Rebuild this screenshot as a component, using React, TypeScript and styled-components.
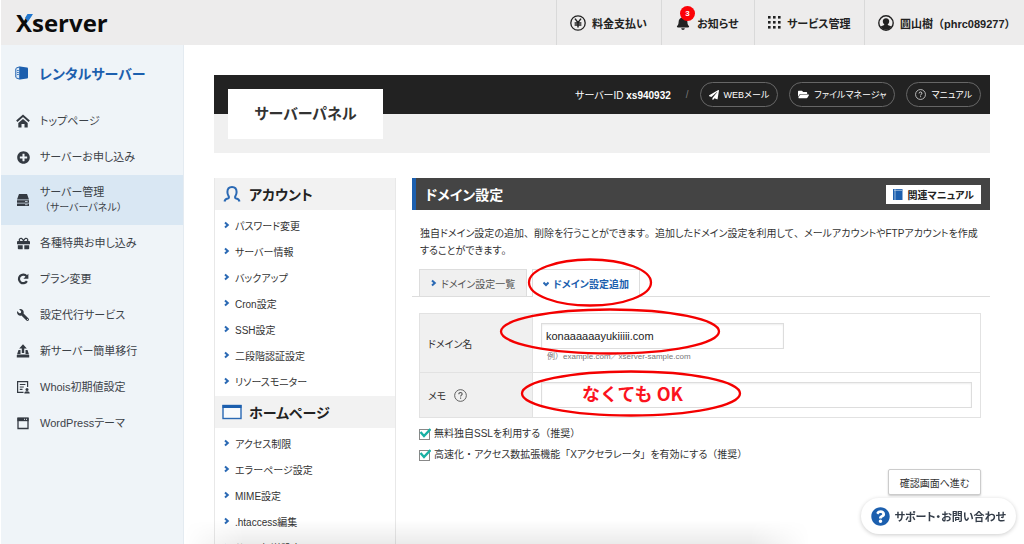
import React from "react";
import styled, { createGlobalStyle, css } from "styled-components";
import {
  FaPlusCircle,
  FaGift,
  FaWrench,
  FaPaperPlane,
  FaFolderOpen,
  FaBell,
  FaQuestionCircle,
} from "react-icons/fa";

const blue = "#1c5fae";

const GlobalStyle = createGlobalStyle`
  * { box-sizing: border-box; }
  html, body, #root { height: 100%; }
  body {
    margin: 0;
    overflow: hidden;
    background: #fff;
    color: #333;
    font-family: "Liberation Sans", "Noto Sans CJK JP", sans-serif;
    font-size: 10px;
    font-feature-settings: "palt";
  }
  h1, h2, h3, p, ul { margin: 0; padding: 0; }
  ul { list-style: none; }
  a { color: inherit; text-decoration: none; }
  button, input { font: inherit; color: inherit; font-feature-settings: inherit; }
  svg { display: block; flex: none; }
`;

const FullWidth = styled.span`
  font-feature-settings: normal;
`;

/* Kana are set proportionally, punctuation keeps its full width. */
const Jp = ({ children }: { children: string }) => (
  <span>
    {children.split(/([、。（）「」／・]+)/).map((part, i) =>
      i % 2 ? <FullWidth key={i}>{part}</FullWidth> : part
    )}
  </span>
);

const Page = styled.div`
  height: 100%;
  display: flex;
  flex-direction: column;
  padding-left: 1px;
`;

const Header = styled.header`
  flex: none;
  height: 45px;
  display: flex;
  justify-content: space-between;
  background: #edecec;
`;

const Logo = styled.a`
  position: relative;
  padding-left: 15px;
  font: 700 24px/46px "Open Sans", sans-serif;
  color: #0c0c0c;
`;

const LogoAccent = styled.svg`
  position: absolute;
  left: 23px;
  top: 14px;
`;

const HeaderNav = styled.nav`
  display: flex;
`;

const HeaderItem = styled.a<{ $width: number }>`
  width: ${(p) => p.$width}px;
  display: flex;
  align-items: center;
  padding-left: 13px;
  gap: 6px;
  border-left: 1px solid #d9d9d9;
  font-size: 11px;
  font-weight: 700;
  white-space: nowrap;
  color: #222;
`;

const BellWrap = styled.span`
  position: relative;
  padding: 0 1px;
`;

const Badge = styled.span`
  position: absolute;
  left: 5px;
  top: -10px;
  width: 15px;
  height: 15px;
  border-radius: 50%;
  background: #fb0207;
  color: #fff;
  font-size: 8px;
  line-height: 15px;
  text-align: center;
`;

const Body = styled.div`
  flex: 1;
  min-height: 0;
  display: flex;
`;

const Sidebar = styled.nav`
  flex: none;
  width: 183px;
  background: #eff4f8;
  border-right: 1px solid #e4ebf1;
`;

const SideTitle = styled.a`
  height: 58px;
  display: flex;
  align-items: center;
  gap: 10px;
  padding: 0 0 3px 14px;
  font-size: 14px;
  font-weight: 700;
  color: ${blue};
`;

const SideItem = styled.a<{ $active?: boolean }>`
  min-height: ${(p) => (p.$active ? 50 : 36)}px;
  display: flex;
  align-items: center;
  gap: 10px;
  padding-left: 15px;
  font-size: 11px;
  line-height: 16px;
  color: #3c4248;
  ${(p) => p.$active && css`background: #d9e7f3;`}
  small {
    display: block;
    font-size: 10px;
  }
`;

const SideIcon = styled.span`
  width: 14px;
  display: flex;
  justify-content: center;
  color: #343a42;
`;

const MirroredWrench = styled(FaWrench)`
  transform: scaleX(-1);
`;

const Main = styled.main`
  flex: 1;
  min-width: 0;
  padding: 30px 34px 0 30px;
  overflow: hidden;
`;

const PanelHeader = styled.div`
  display: grid;
  grid-template-rows: 39px 39px;
  background: linear-gradient(#222 39px, #f0f0f0 39px);
`;

const PanelTitle = styled.h1`
  grid-area: 1 / 1 / 3 / 2;
  width: 155px;
  height: 50px;
  margin: 14px;
  background: #fff;
  font-size: 15px;
  line-height: 50px;
  text-align: center;
`;

const PanelBar = styled.div`
  grid-area: 1 / 2;
  display: flex;
  align-items: center;
  justify-content: flex-end;
  padding-right: 9px;
  gap: 11px;
  color: #fff;
`;

const ServerId = styled.span`
  font-size: 10px;
`;

const Slash = styled.span`
  color: #777;
  padding-left: 4px;
`;

const PillLink = styled.a`
  height: 25px;
  display: flex;
  align-items: center;
  gap: 5px;
  padding: 0 8px;
  border: 1px solid #666;
  border-radius: 13px;
  font-size: 9px;
  white-space: nowrap;
`;

const Columns = styled.div`
  display: flex;
  align-items: flex-start;
  gap: 16px;
  margin-top: 25px;
`;

const Menu = styled.nav`
  flex: none;
  width: 182px;
  border: 1px solid #e8e8e8;
  border-width: 0 1px;
`;

const MenuHead = styled.h3`
  height: 32px;
  display: flex;
  align-items: center;
  gap: 7px;
  padding-left: 7px;
  background: #f2f2f2;
  font-size: 14px;
  color: #222;
`;

const MenuList = styled.ul`
  padding: 2px 0;
`;

const MenuLink = styled.a`
  height: 26px;
  display: flex;
  align-items: center;
  gap: 5px;
  padding-left: 9px;
`;

const Content = styled.section`
  position: relative;
  flex: 1;
  min-width: 0;
`;

const ContentHead = styled.div`
  height: 32px;
  display: flex;
  align-items: center;
  justify-content: space-between;
  padding: 0 9px;
  border-left: 4px solid ${blue};
  background: #444;
  color: #fff;
  h2 { font-size: 14px; }
`;

const ManualButton = styled.button`
  height: 19px;
  display: flex;
  align-items: center;
  gap: 5px;
  padding: 0 7px;
  border: 0;
  background: #fff;
  color: #222;
  font-weight: 700;
`;

const Lead = styled.p`
  padding: 15px 0 10px 8px;
  line-height: 17px;
`;

const Tabs = styled.div`
  display: flex;
  gap: 5px;
  padding-left: 7px;
  border-bottom: 1px solid #ddd;
`;

const Tab = styled.a<{ $active?: boolean }>`
  height: ${(p) => (p.$active ? 28 : 27)}px;
  width: 108px;
  display: flex;
  align-items: center;
  justify-content: center;
  gap: 4px;
  border: 1px solid #ddd;
  border-bottom: 0;
  margin-bottom: ${(p) => (p.$active ? "-1px" : "0")};
  background: ${(p) => (p.$active ? "#fff" : "#f0f0f0")};
  color: ${(p) => (p.$active ? blue : "#555")};
  font-weight: ${(p) => (p.$active ? 700 : 400)};
`;

const FormArea = styled.form`
  padding: 16px 9px 0 7px;
`;

const Table = styled.table`
  width: 100%;
  border-collapse: collapse;
  th, td {
    border: 1px solid #e2e2e2;
    text-align: left;
    font-weight: 400;
  }
  th {
    width: 113px;
    padding: 0 8px;
    background: #f0f0f0;
  }
  td { padding: 9px 8px; }
`;

const ThLabel = styled.label`
  display: flex;
  align-items: center;
  gap: 8px;
`;

const TextInput = styled.input<{ $wide?: boolean }>`
  display: block;
  width: ${(p) => (p.$wide ? "100%" : "243px")};
  height: 26px;
  padding: 0 4px;
  border: 1px solid #ddd;
  font-size: 11px;
  color: #222;
  box-shadow: inset 0 1px 2px #eee;
`;

const Hint = styled.p`
  padding: 1px 0 0 6px;
  font-size: 8px;
  line-height: 13px;
  color: #777;
`;

const Checks = styled.div`
  display: grid;
  gap: 5px;
  padding-top: 8px;
`;

const CheckLabel = styled.label`
  display: flex;
  align-items: center;
  gap: 3px;
  line-height: 16px;
`;

const CheckMark = styled.span`
  position: relative;
  width: 12px;
  height: 12px;
  input {
    appearance: none;
    display: block;
    width: 11px;
    height: 11px;
    margin: 1px 0 0;
    border: 1px solid #888;
    background: #fff;
  }
  svg {
    position: absolute;
    inset: 0;
  }
`;

const Actions = styled.div`
  display: flex;
  justify-content: flex-end;
  padding-top: 6px;
`;

const SubmitButton = styled.button`
  width: 93px;
  height: 26px;
  padding: 0;
  border: 1px solid #ccc;
  border-radius: 2px;
  background: #fff;
  box-shadow: 0 1px 2px #ccc;
`;

const Marks = styled.svg`
  position: absolute;
  left: 0;
  top: 0;
  pointer-events: none;
`;

const MarkText = styled.span`
  position: absolute;
  left: 170px;
  top: 202px;
  font-size: 18px;
  font-weight: 700;
  line-height: 26px;
  color: #fb1320;
  font-family: "Noto Sans CJK JP", sans-serif;
  font-feature-settings: normal;
`;

const Support = styled.button`
  position: fixed;
  right: 8px;
  bottom: 10px;
  height: 36px;
  display: flex;
  align-items: center;
  gap: 5px;
  padding: 0 10px;
  border: 0;
  border-radius: 18px;
  background: #fff;
  box-shadow: 0 1px 4px rgba(0, 0, 0, 0.2);
  font-size: 11px;
  font-weight: 700;
  color: #333c48;
`;

const BottomFade = styled.div`
  position: fixed;
  left: 184px;
  right: 214px;
  bottom: 0;
  height: 24px;
  background: linear-gradient(rgba(0, 0, 0, 0), rgba(0, 0, 0, 0.08));
  mask-image: linear-gradient(90deg, transparent, #000 60px, #000 calc(100% - 60px), transparent);
  pointer-events: none;
`;

const Chevron = ({ down }: { down?: boolean }) => (
  <svg width="6" height="8" viewBox="0 0 6 8" fill="none" stroke="#2a69b4" strokeWidth="2">
    {down ? <path d="M0.5 2.5 3 5 5.5 2.5" /> : <path d="M1 1.5 3.8 4 1 6.5" />}
  </svg>
);

const YenIcon = () => (
  <svg width="16" height="16" viewBox="0 0 16 16" fill="none" stroke="#222" strokeWidth="1.3">
    <circle cx="8" cy="8" r="7.2" />
    <path d="M5 3.600 8 7.600 11 3.600M8 7.600v5M4.600 7.900h6.800M4.600 10.100h6.800" strokeWidth="1.500" />
  </svg>
);

const GridIcon = () => (
  <svg width="13" height="13" viewBox="0 0 13 13" fill="#222">
    {[0, 5, 10].map((y) => [0, 5, 10].map((x) => <rect key={`${x}-${y}`} x={x} y={y} width="2.6" height="2.6" />))}
  </svg>
);

const UserIcon = () => (
  <svg width="16" height="16" viewBox="0 0 16 16">
    <circle cx="8" cy="8" r="7.2" fill="none" stroke="#222" strokeWidth="1.4" />
    <path d="M8 3.200c2.100 0 3.200 1.300 3.200 3.100 0 1.400-.6 2.400-1.400 3v.8l3.600 1.500C12.200 13.700 10.200 14.800 8 14.800s-4.200-1.100-5.400-3.200l3.600-1.500v-.8C5.400 8.700 4.800 7.700 4.800 6.300c0-1.800 1.100-3.100 3.200-3.100z" fill="#222" />
  </svg>
);

const BuildingIcon = () => (
  <svg width="14" height="14" viewBox="0 0 14 14">
    <path d="M5 .5 12 1.500q1 .2 1 1v9q0 .8-1 1L5 13.500z" fill={blue} />
    <path d="M4.700.8 1.500 2Q.8 2.300.8 3v8q0 .7.7 1l3.200 1.200z" fill="#dce9f6" stroke={blue} strokeWidth="1" />
    <path d="M2 4.500h1.800M2 6.500h1.800M2 8.500h1.800" stroke={blue} strokeWidth=".8" />
  </svg>
);

const HomeIcon = () => (
  <svg width="14" height="14" viewBox="0 0 14 14">
    <path d="M.8 7.200 7 1.800l6.200 5.400" fill="none" stroke="#343a42" strokeWidth="2" />
    <path d="M7 5 2.300 9v4.500h3.200V10h3v3.500h3.200V9z" fill="#343a42" />
  </svg>
);

const ServerIcon = () => (
  <svg width="14" height="14" viewBox="0 0 14 14" fill="#343a42">
    <path d="M3 1h8l2 5.500H1z" />
    <path d="M1 7.300h12v2.400H1zM1 10.500h12V13H1z" />
    <path d="M9 8.500h2.600M9 11.700h2.600" stroke="#d9e7f3" strokeWidth=".8" />
  </svg>
);

const ReloadIcon = () => (
  <svg width="14" height="14" viewBox="0 0 14 14" fill="none" stroke="#343a42" strokeWidth="2.200">
    <path d="M10.600 4.200A4.300 4.300 0 1 0 10.900 9.200" />
    <path d="M12.400 1.800v5H7.400z" fill="#343a42" stroke="none" />
  </svg>
);

const UploadIcon = () => (
  <svg width="14" height="14" viewBox="0 0 14 14" fill="#343a42">
    <path d="M7 .3 10.800 4.500H8.200V9H5.800V4.500H3.200z" />
    <path d="M2.500 6h2v4h5V6h2L13 10.500H1z" />
    <path d="M.8 11h12.400v2.500H.8z" />
  </svg>
);

const WhoisIcon = () => (
  <svg width="14" height="14" viewBox="0 0 14 14" fill="none" stroke="#343a42" strokeWidth="1.200">
    <path d="M7.500 12.400H1.600V1.600h10v5.400M3.800 4.500h5.600M3.800 7h4M3.800 9.400h2.700" />
    <circle cx="11" cy="9.500" r="1.500" fill="#343a42" stroke="none" />
    <path d="M8.300 13.500q0-2.200 2.700-2.200t2.700 2.200z" fill="#343a42" stroke="none" />
  </svg>
);

const ThemeIcon = () => (
  <svg width="14" height="14" viewBox="0 0 14 14">
    <path d="M2 2.500h10v10H2z" fill="none" stroke="#343a42" strokeWidth="1.300" />
    <path d="M1.400 1.500h11.200v3.700H1.400z" fill="#343a42" />
    <path d="M8 3.300h1M10 3.300h1" stroke="#eff4f8" strokeWidth="1" />
  </svg>
);

const AccountIcon = () => (
  <svg width="20" height="18" viewBox="0 0 20 18" fill="none" stroke="#2a69b4" strokeWidth="2">
    <path d="M2.500 16.500c.4-2 1.600-2.600 3.200-3 1.300-.4 1.600-1.300.9-2.400C5.800 9.900 5.400 8.700 5.400 7c0-3.200 1.800-5 4.600-5s4.600 1.800 4.600 5c0 1.700-.4 2.900-1.200 4.100-.7 1.100-.4 2 .9 2.400 1.600.4 2.800 1 3.200 3" />
  </svg>
);

const WindowIcon = () => (
  <svg width="20" height="16" viewBox="0 0 20 16">
    <rect x="1" y="1.500" width="18" height="13" fill="#f8fafc" stroke="#2a69b4" strokeWidth="1.400" />
    <path d="M.5 1h19v3H.5z" fill={blue} />
  </svg>
);

const BookIcon = () => (
  <svg width="10" height="11" viewBox="0 0 10 11">
    <path d="M0 0h9.500v11H0z" fill={blue} />
    <path d="M2 0v11M1 1.300h8" stroke="#b8cfe8" strokeWidth=".8" />
  </svg>
);

const HelpIcon = ({ size, color }: { size: number; color: string }) => (
  <svg width={size} height={size} viewBox="0 0 14 14" fill="none" stroke={color} strokeWidth="1">
    <circle cx="7" cy="7" r="6.300" />
    <path d="M5.200 5.600c0-1.100.8-1.800 1.800-1.800s1.800.7 1.800 1.600c0 1.200-1.700 1.300-1.700 2.700M7.100 9.200v1.200" strokeWidth="1.200" />
  </svg>
);

const Check = ({ id, children }: { id: string; children: string }) => (
  <CheckLabel htmlFor={id}>
    <CheckMark>
      <input id={id} type="checkbox" defaultChecked />
      <svg width="12" height="12" viewBox="0 0 12 12" fill="none" stroke="#18b0a4" strokeWidth="2.400">
        <path d="M1.500 4 5 8 11.500 1" />
      </svg>
    </CheckMark>
    <Jp>{children}</Jp>
  </CheckLabel>
);

const sideItems: { icon: React.ReactNode; text: string; sub?: string }[] = [
  { icon: <HomeIcon />, text: "トップページ" },
  { icon: <FaPlusCircle size={13} />, text: "サーバーお申し込み" },
  { icon: <ServerIcon />, text: "サーバー管理", sub: "（サーバーパネル）" },
  { icon: <FaGift size={13} />, text: "各種特典お申し込み" },
  { icon: <ReloadIcon />, text: "プラン変更" },
  { icon: <MirroredWrench size={12} />, text: "設定代行サービス" },
  { icon: <UploadIcon />, text: "新サーバー簡単移行" },
  { icon: <WhoisIcon />, text: "Whois初期値設定" },
  { icon: <ThemeIcon />, text: "WordPressテーマ" },
];

const menus = [
  {
    title: "アカウント",
    icon: <AccountIcon />,
    items: ["パスワード変更", "サーバー情報", "バックアップ", "Cron設定", "SSH設定", "二段階認証設定", "リソースモニター"],
  },
  {
    title: "ホームページ",
    icon: <WindowIcon />,
    items: ["アクセス制限", "エラーページ設定", "MIME設定", ".htaccess編集", "サイト転送設定"],
  },
];

export default function App() {
  return (
    <Page>
      <GlobalStyle />
      <Header>
        <Logo href="#">
          Xserver
          <LogoAccent width="9" height="8" viewBox="0 0 9 8">
            <path d="M3.500 0H9L4 7.500 1 4z" fill="#2277cf" />
          </LogoAccent>
        </Logo>
        <HeaderNav>
          <HeaderItem href="#" $width={105}><YenIcon />料金支払い</HeaderItem>
          <HeaderItem href="#" $width={93}>
            <BellWrap><FaBell size={14} /><Badge>3</Badge></BellWrap>お知らせ
          </HeaderItem>
          <HeaderItem href="#" $width={110}><GridIcon />サービス管理</HeaderItem>
          <HeaderItem href="#" $width={160}><UserIcon /><Jp>圓山樹（phrc089277）</Jp></HeaderItem>
        </HeaderNav>
      </Header>
      <Body>
        <Sidebar>
          <SideTitle href="#"><BuildingIcon />レンタルサーバー</SideTitle>
          {sideItems.map((item) => (
            <SideItem key={item.text} href="#" $active={!!item.sub}>
              <SideIcon>{item.icon}</SideIcon>
              <span>{item.text}{item.sub && <small><Jp>{item.sub}</Jp></small>}</span>
            </SideItem>
          ))}
        </Sidebar>
        <Main>
          <PanelHeader>
            <PanelTitle>サーバーパネル</PanelTitle>
            <PanelBar>
              <ServerId>サーバーID <b>xs940932</b></ServerId>
              <Slash>/</Slash>
              <PillLink href="#"><FaPaperPlane size={10} />WEBメール</PillLink>
              <PillLink href="#"><FaFolderOpen size={11} />ファイルマネージャ</PillLink>
              <PillLink href="#"><HelpIcon size={11} color="#ddd" />マニュアル</PillLink>
            </PanelBar>
          </PanelHeader>
          <Columns>
            <Menu>
              {menus.map((menu) => (
                <React.Fragment key={menu.title}>
                  <MenuHead>{menu.icon}{menu.title}</MenuHead>
                  <MenuList>
                    {menu.items.map((text) => (
                      <li key={text}><MenuLink href="#"><Chevron />{text}</MenuLink></li>
                    ))}
                  </MenuList>
                </React.Fragment>
              ))}
            </Menu>
            <Content>
              <ContentHead>
                <h2>ドメイン設定</h2>
                <ManualButton type="button"><BookIcon />関連マニュアル</ManualButton>
              </ContentHead>
              <Lead>
                <Jp>独自ドメイン設定の追加、削除を行うことができます。追加したドメイン設定を利用して、メールアカウントやFTPアカウントを作成</Jp>
                <br />
                <Jp>することができます。</Jp>
              </Lead>
              <Tabs>
                <Tab href="#"><Chevron />ドメイン設定一覧</Tab>
                <Tab href="#" $active><Chevron down />ドメイン設定追加</Tab>
              </Tabs>
              <FormArea onSubmit={(e) => e.preventDefault()}>
                <Table>
                  <tbody>
                    <tr>
                      <th><ThLabel htmlFor="domain">ドメイン名</ThLabel></th>
                      <td>
                        <TextInput id="domain" defaultValue="konaaaaaayukiiiii.com" />
                        <Hint><Jp>例）example.com／xserver-sample.com</Jp></Hint>
                      </td>
                    </tr>
                    <tr>
                      <th><ThLabel htmlFor="memo">メモ<HelpIcon size={13} color="#555" /></ThLabel></th>
                      <td><TextInput id="memo" $wide /></td>
                    </tr>
                  </tbody>
                </Table>
                <Checks>
                  <Check id="ssl">無料独自SSLを利用する（推奨）</Check>
                  <Check id="accelerator">高速化・アクセス数拡張機能「Xアクセラレータ」を有効にする（推奨）</Check>
                </Checks>
                <Actions><SubmitButton>確認画面へ進む</SubmitButton></Actions>
              </FormArea>
              <Marks width="340" height="250" viewBox="0 0 340 250" fill="none" stroke="#f40000" strokeWidth="2.300">
                <ellipse cx="178" cy="104.500" rx="61" ry="23" />
                <ellipse cx="198" cy="153.500" rx="109" ry="22" />
                <ellipse cx="219" cy="215.500" rx="109" ry="22" />
              </Marks>
              <MarkText>なくても OK</MarkText>
            </Content>
          </Columns>
        </Main>
      </Body>
      <BottomFade />
      <Support type="button"><FaQuestionCircle size={19} color={blue} />サポート・お問い合わせ</Support>
    </Page>
  );
}
